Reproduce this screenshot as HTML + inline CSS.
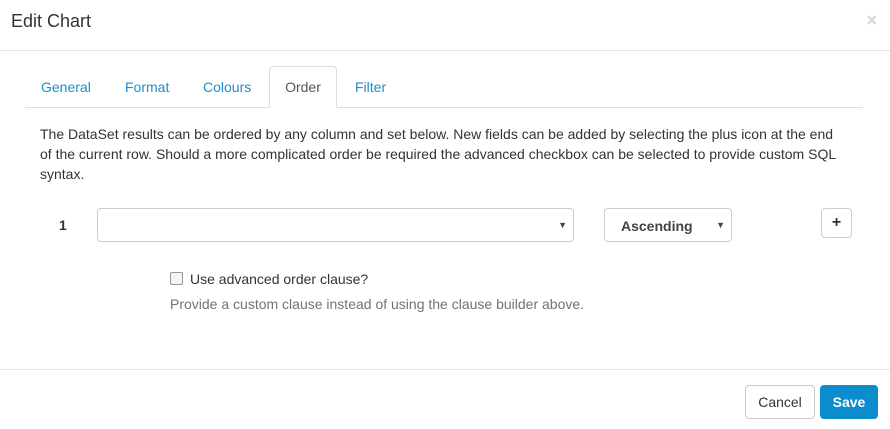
<!DOCTYPE html>
<html><head><meta charset="utf-8"><style>
*{box-sizing:border-box;margin:0;padding:0}
body{width:890px;height:429px;background:#fff;font-family:"Liberation Sans",sans-serif;font-size:14px;color:#333;position:relative;overflow:hidden}
.a{position:absolute}
.title{left:11px;top:11px;font-size:18px;color:#333}
.close{right:13px;top:10px;font-size:18px;font-weight:bold;color:#d5d5d5}
.hr{left:0;width:890px;height:1px;background:#e5e5e5}
.tab{top:79px;color:#1a8fc9;font-size:14px}
.active{left:269px;top:66px;width:68px;height:42px;border:1px solid #ddd;border-bottom:1px solid #fff;border-radius:4px 4px 0 0;background:#fff;color:#555;text-align:center;padding-top:12px}
.desc{left:40px;top:124px;width:800px;line-height:20px;color:#333;font-size:14px}
.sel{border:1px solid #ccc;border-radius:4px;background:#fff}
.arr{position:absolute;font-size:9px;color:#444}
.btn{border:1px solid #ccc;border-radius:4px;background:#fff;text-align:center}
</style></head><body>
<div class="a title">Edit Chart</div>
<div class="a close">×</div>
<div class="a hr" style="top:50px"></div>
<div class="a hr" style="left:25px;width:838px;top:107px;background:#ddd"></div>
<div class="a tab" style="left:41px">General</div>
<div class="a tab" style="left:125px">Format</div>
<div class="a tab" style="left:203px">Colours</div>
<div class="a active">Order</div>
<div class="a tab" style="left:355px">Filter</div>
<div class="a desc">The DataSet results can be ordered by any column and set below. New fields can be added by selecting the plus icon at the end of the current row. Should a more complicated order be required the advanced checkbox can be selected to provide custom SQL syntax.</div>
<div class="a" style="left:59px;top:217px;font-weight:bold">1</div>
<div class="a sel" style="left:97px;top:208px;width:477px;height:34px"><span class="arr" style="right:6px;top:11px">▼</span></div>
<div class="a sel" style="left:604px;top:208px;width:128px;height:34px"><span style="position:absolute;left:16px;top:9px;font-weight:bold;color:#444">Ascending</span><span class="arr" style="right:6px;top:11px">▼</span></div>
<div class="a btn" style="left:821px;top:208px;width:31px;height:30px;font-weight:bold;font-size:16px;line-height:27px">+</div>
<div class="a" style="left:170px;top:272px;width:13px;height:13px;border:1px solid #999;border-radius:2px;background:#f5f5f5"></div>
<div class="a" style="left:190px;top:271px">Use advanced order clause?</div>
<div class="a" style="left:170px;top:296px;color:#737373">Provide a custom clause instead of using the clause builder above.</div>
<div class="a hr" style="top:369px"></div>
<div class="a btn" style="left:745px;top:385px;width:70px;height:34px;line-height:32px;color:#333">Cancel</div>
<div class="a" style="left:820px;top:385px;width:58px;height:34px;line-height:34px;background:#0a8ccd;color:#fff;border-radius:4px;text-align:center;font-weight:bold">Save</div>
</body></html>
